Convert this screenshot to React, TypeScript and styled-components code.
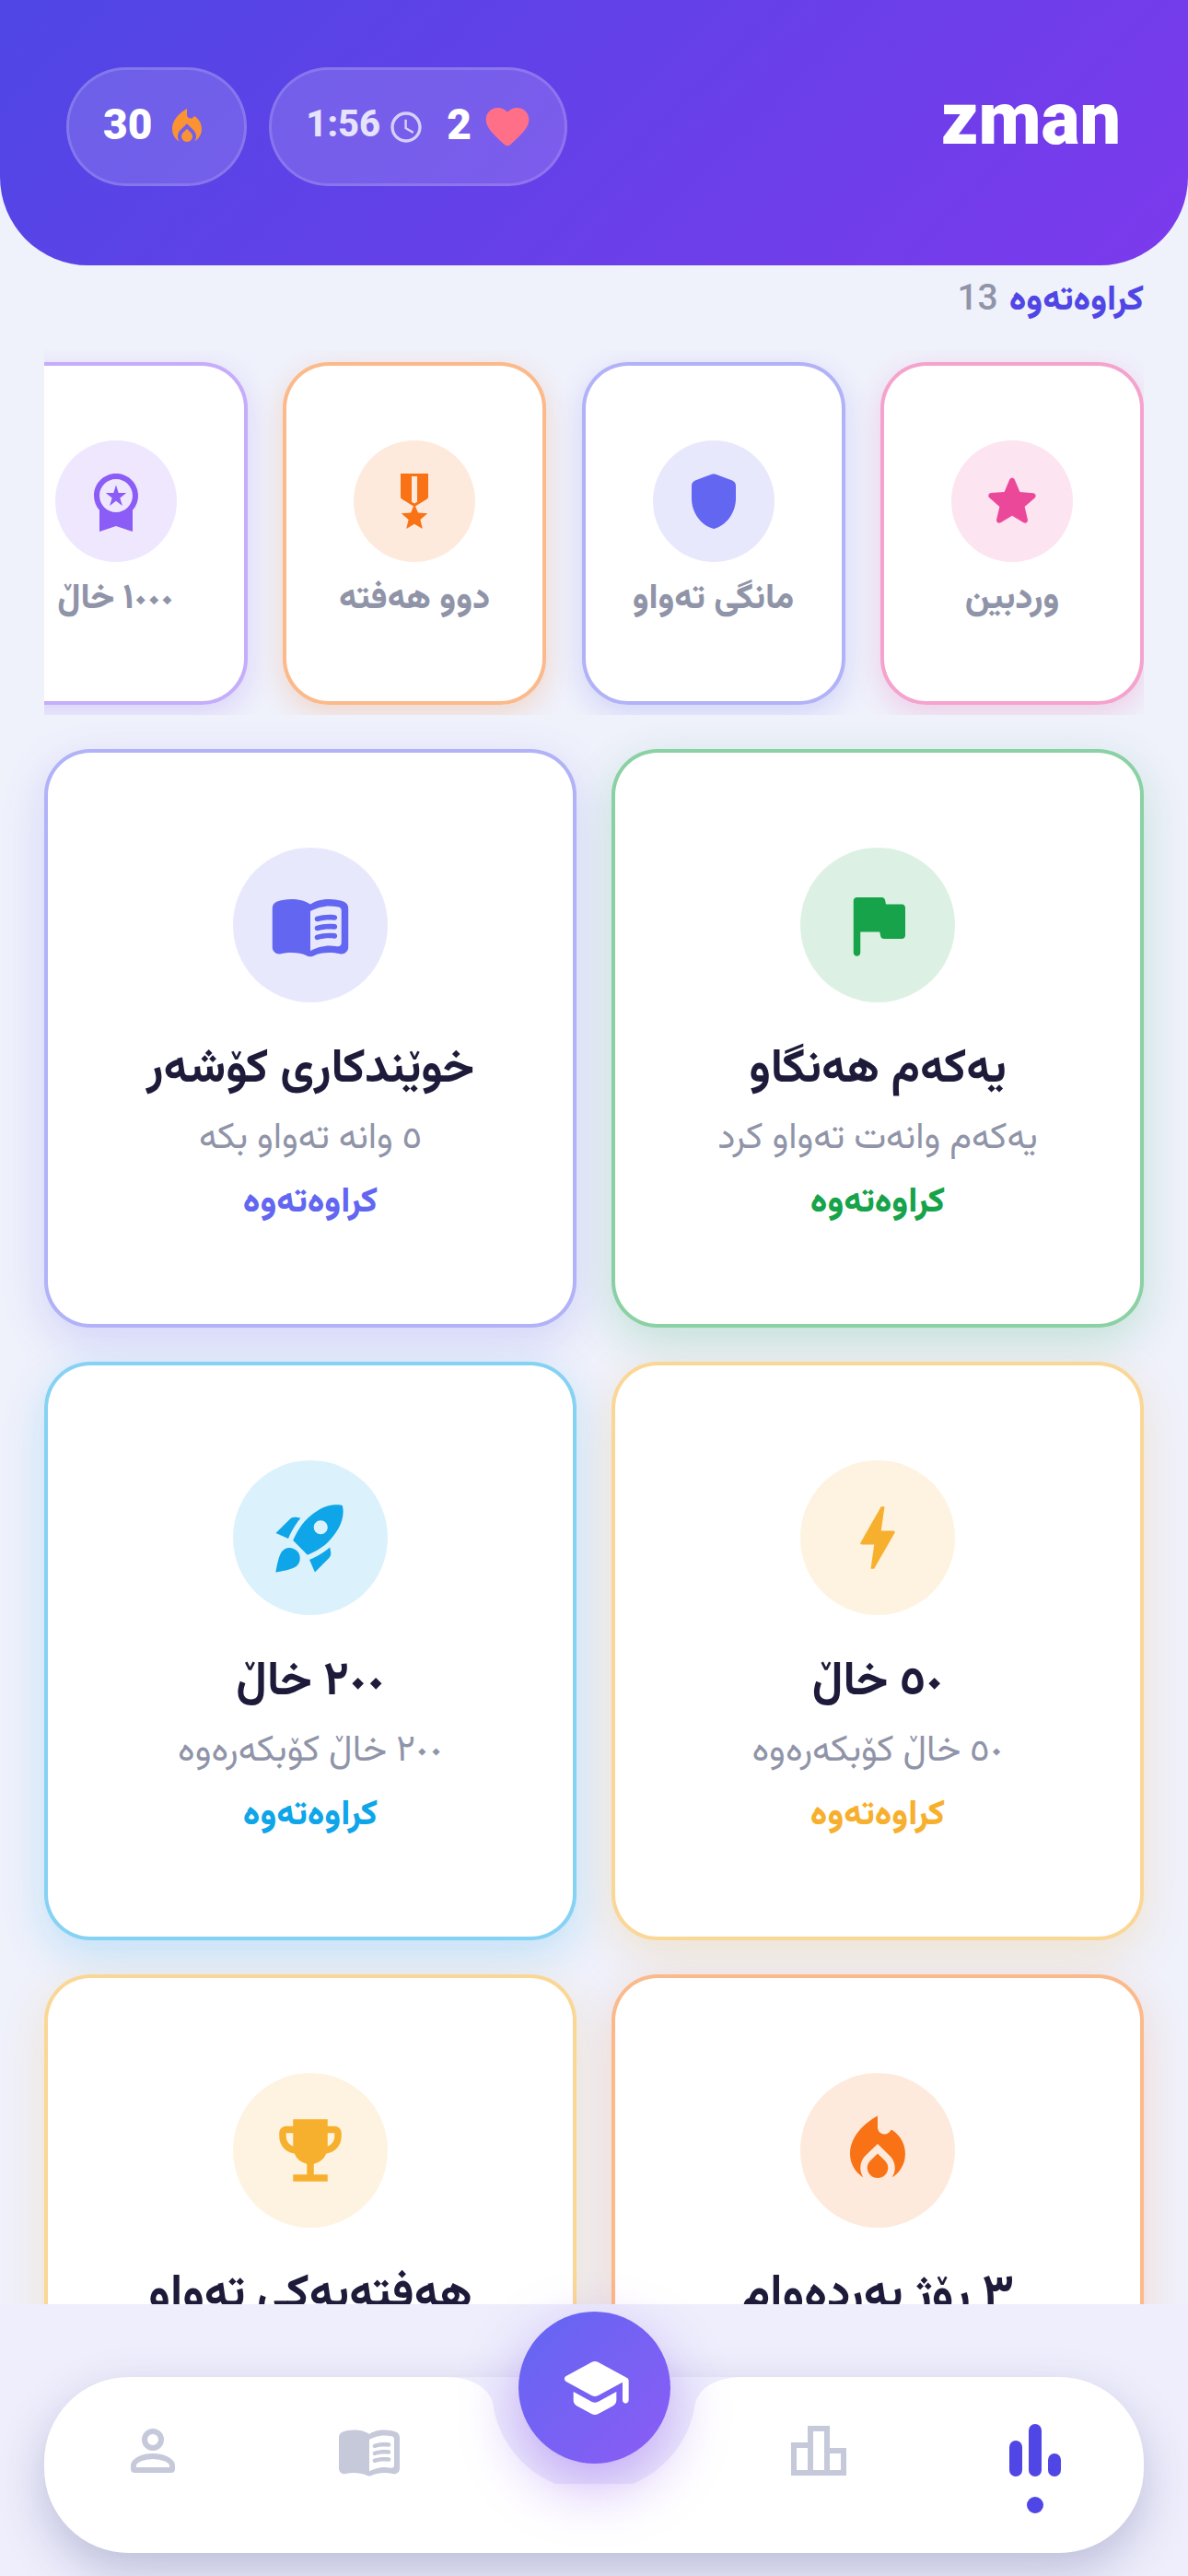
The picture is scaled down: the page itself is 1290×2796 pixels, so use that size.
import * as React from 'react'
import styled, { createGlobalStyle } from 'styled-components'
import {
  MdAccessTime,
  MdBolt,
  MdEmojiEvents,
  MdLocalFireDepartment,
  MdMilitaryTech,
  MdOutlineLeaderboard,
  MdRocketLaunch,
  MdWorkspacePremium,
} from 'react-icons/md'

const Global = createGlobalStyle`
  html, body { margin: 0; padding: 0; background: #eff1fb; }
  * { box-sizing: border-box; }
  body { font-family: Roboto, Vazirmatn, "Noto Sans Arabic", sans-serif; }
`

const Screen = styled.div`
  width: 1290px;
  height: 2796px;
  display: flex;
  flex-direction: column;
  overflow: hidden;
  background: #eff1fb;
`

// ---------------------------------------- [Header] ----------------------------------------
const Header = styled.header`
  flex: none;
  height: 288px;
  padding: 73px 73px 0 72px;
  display: flex;
  justify-content: space-between;
  align-items: flex-start;
  background: linear-gradient(135deg, #4f46e5 0%, #7c3aed 100%);
  border-radius: 0 0 96px 96px;
`

const Stats = styled.div`
  display: flex;
  gap: 24px;
`

const Pill = styled.div<{ $right: number }>`
  height: 129px;
  padding: 0 ${(p) => p.$right}px 0 37px;
  display: flex;
  align-items: center;
  border-radius: 65px;
  background: rgba(255, 255, 255, 0.15);
  border: 3px solid rgba(255, 255, 255, 0.15);
`

const PillNumber = styled.span<{ $gap: number }>`
  font-size: 46px;
  font-weight: 900;
  line-height: 54px;
  margin: -5px ${(p) => p.$gap}px 0 0;
  color: #fff;
`

const PillTime = styled.span`
  font-size: 40px;
  font-weight: 800;
  line-height: 54px;
  margin: -5px 8px 0 0;
  color: #e6e4fd;
`

const ClockIcon = styled(MdAccessTime)`
  color: #d5d0fa;
  margin-right: 24px;
`

const Brand = styled.div`
  font-size: 79px;
  font-weight: 900;
  line-height: 92px;
  color: #fff;
  margin-top: 10px;
`

// ---------------------------------------- [Completed strip] ----------------------------------------
const Main = styled.main`
  flex: 1;
  min-height: 0;
  overflow: hidden;
`

const CountLine = styled.div`
  height: 92px;
  padding: 10px 48px 0 0;
  display: flex;
  gap: 12px;
  line-height: 50px;
`

const CountLabel = styled.span`
  font-size: 38px;
  font-weight: 800;
  color: #4f46e5;
`

const CountValue = styled.span`
  color: #9094a8;
  font-size: 39px;
  font-weight: 500;
`

const Strip = styled.div`
  margin: 0 48px;
  height: 396px;
  padding: 13px 0 11px;
  display: flex;
  gap: 38.5px;
  overflow: hidden;
`

const BadgeCard = styled.div<{ $color: string }>`
  flex: none;
  width: 286px;
  height: 372px;
  padding-top: 81px;
  display: flex;
  flex-direction: column;
  align-items: center;
  background: #fff;
  border: 4px solid ${(p) => p.$color}80;
  border-radius: 50px;
  box-shadow: 0 10px 30px ${(p) => p.$color}33;
`

const IconCircle = styled.div<{ $color: string; $size: number }>`
  flex: none;
  width: ${(p) => p.$size}px;
  height: ${(p) => p.$size}px;
  display: flex;
  align-items: center;
  justify-content: center;
  border-radius: 50%;
  color: ${(p) => p.$color};
  background: ${(p) => p.$color}26;
`

const BadgeLabel = styled.div`
  margin-top: 10px;
  font-size: 38px;
  font-weight: 800;
  line-height: 54px;
  color: #9094a8;
  white-space: nowrap;
`

// ---------------------------------------- [Achievement grid] ----------------------------------------
const Grid = styled.div`
  margin: 37px 48px 0;
  display: grid;
  grid-template-columns: 578px 578px;
  grid-auto-rows: 628px;
  gap: 37px 38px;
`

const Card = styled.div<{ $color: string }>`
  padding-top: 103px;
  display: flex;
  flex-direction: column;
  align-items: center;
  background: #fff;
  border: 4px solid ${(p) => p.$color}80;
  border-radius: 50px;
  box-shadow: 0 16px 48px ${(p) => p.$color}33;
`

const CardTitle = styled.div`
  margin-top: 35px;
  font-size: 51px;
  font-weight: 700;
  line-height: 68px;
  color: #1e1b3a;
`

const CardDesc = styled.div`
  margin-top: 17px;
  font-size: 40px;
  line-height: 50px;
  color: #9094a8;
`

const CardStatus = styled.div<{ $color: string }>`
  margin-top: 19px;
  font-size: 38px;
  font-weight: 800;
  line-height: 50px;
  color: ${(p) => p.$color};
`

// ---------------------------------------- [Bottom navigation] ----------------------------------------
const NavArea = styled.div`
  flex: none;
  position: relative;
  height: 295px;
  padding: 79px 48px 0;
  background: #eeeefc;
`

const NavBar = styled.nav`
  position: relative;
  height: 191px;
  padding: 0 82px;
  display: flex;
  justify-content: space-between;
  background: #fff;
  border-radius: 92px;
  box-shadow: 0 20px 50px rgba(60, 70, 130, 0.28);
`

const NavGroup = styled.div`
  display: flex;
  gap: 163px;
`

const Notch = styled.svg`
  position: absolute;
  left: 422px;
  top: 0;
`

const Fab = styled.button`
  position: absolute;
  left: 563px;
  top: 8px;
  width: 165px;
  height: 165px;
  padding: 0;
  display: flex;
  align-items: center;
  justify-content: center;
  border: none;
  border-radius: 50%;
  color: #fff;
  background: linear-gradient(135deg, #6366f1 0%, #8b5cf6 100%);
  box-shadow: 0 24px 64px rgba(124, 58, 237, 0.4);
`

const NavItem = styled.div<{ $active?: boolean }>`
  position: relative;
  width: 72px;
  padding-top: 44px;
  color: ${(p) => (p.$active ? '#4f46e5' : '#c5c9d9')};
`

const ActiveDot = styled.span`
  position: absolute;
  left: 50%;
  top: 130px;
  width: 18px;
  height: 18px;
  margin-left: -9px;
  border-radius: 50%;
  background: #4f46e5;
`

// ---------------------------------------- [Rounded icons] ----------------------------------------
type IconProps = { size?: number; color?: string }

const roundIcon = (...paths: string[]) => ({ size = 24, color = 'currentColor' }: IconProps) => (
  <svg width={size} height={size} viewBox="0 0 24 24" fill={color}>
    {paths.map((d) => (
      <path key={d} d={d} />
    ))}
  </svg>
)

const StarIcon = roundIcon(
  'M12 17.270l4.150 2.510c.76.46 1.690-.22 1.490-1.080l-1.100-4.720 3.670-3.180c.67-.58.31-1.680-.57-1.750l-4.830-.41-1.890-4.460c-.34-.81-1.500-.81-1.840 0L9.190 8.630l-4.830.41c-.88.07-1.240 1.170-.57 1.750l3.670 3.180-1.100 4.720c-.2.86.73 1.540 1.490 1.080l4.150-2.500z',
)
const ShieldIcon = roundIcon(
  'M11.300 2.260l-6 2.250C4.520 4.810 4 5.550 4 6.390v4.710c0 5.050 3.410 9.760 8 10.910 4.590-1.150 8-5.860 8-10.910V6.390c0-.83-.52-1.580-1.300-1.870l-6-2.250c-.45-.18-.95-.18-1.400-.01z',
)
const FlagIcon = roundIcon(
  'M14.400 6l-.24-1.200c-.09-.46-.5-.8-.98-.8H6c-.55 0-1 .45-1 1v15c0 .55.45 1 1 1s1-.45 1-1v-6h5.600l.24 1.200c.09.47.5.8.98.8H19c.55 0 1-.45 1-1V7c0-.55-.45-1-1-1h-4.600z',
)
const BookIcon = roundIcon(
  'M17.500 4.500c-1.950 0-4.050.4-5.500 1.500-1.450-1.100-3.550-1.500-5.500-1.500-1.450 0-2.990.22-4.280.79C1.490 5.620 1 6.330 1 7.140v11.280c0 1.300 1.220 2.260 2.480 1.940.98-.25 2.020-.36 3.020-.36 1.560 0 3.220.26 4.560.92.600.3 1.280.3 1.870 0 1.340-.67 3-.92 4.560-.92 1 0 2.040.11 3.020.36 1.260.33 2.480-.63 2.480-1.940V7.140c0-.81-.49-1.520-1.220-1.850-1.280-.57-2.820-.79-4.270-.79zM21 17.230c0 .63-.58 1.090-1.200.98-.75-.14-1.530-.2-2.300-.2-1.700 0-4.150.65-5.500 1.500V8c1.350-.85 3.800-1.500 5.500-1.500.92 0 1.830.09 2.700.28.46.1.8.51.8.98v9.470z',
  'M13.980 11.010c-.32 0-.61-.2-.71-.52-.13-.39.09-.82.48-.94 1.540-.5 3.530-.66 5.360-.45.41.05.71.42.66.83-.05.41-.42.71-.83.66-1.620-.19-3.390-.04-4.730.39-.08.01-.16.03-.23.03z',
  'M13.980 13.670c-.32 0-.61-.2-.71-.52-.13-.39.09-.82.48-.94 1.530-.5 3.530-.66 5.360-.45.41.05.71.42.66.83-.05.41-.42.71-.83.66-1.620-.19-3.390-.04-4.730.39-.08.02-.16.03-.23.03z',
  'M13.980 16.330c-.32 0-.61-.2-.71-.52-.13-.39.09-.82.48-.94 1.530-.5 3.530-.66 5.360-.45.41.05.71.42.66.83-.05.41-.42.7-.83.66-1.620-.19-3.390-.04-4.730.39-.08.02-.16.03-.23.03z',
)
const HeartIcon = roundIcon(
  'M13.350 20.130c-.76.69-1.930.69-2.690-.01l-.11-.1C5.300 15.270 1.870 12.150 2 8.260c.06-1.700.93-3.330 2.340-4.290 2.640-1.800 5.900-.96 7.660 1.100 1.760-2.060 5.020-2.910 7.660-1.100 1.410.96 2.280 2.590 2.340 4.290.14 3.890-3.300 7.010-8.550 11.780l-.1.090z',
)
const SchoolIcon = roundIcon(
  'M5 13.180v2.810c0 .73.4 1.410 1.040 1.760l5 2.730c.6.33 1.320.33 1.920 0l5-2.730c.64-.35 1.040-1.030 1.040-1.760v-2.810l-6.040 3.300c-.6.33-1.320.33-1.920 0L5 13.180zm6.040-9.660l-8.430 4.600c-.69.38-.69 1.380 0 1.760l8.430 4.600c.6.33 1.320.33 1.920 0L21 10.090V16c0 .55.45 1 1 1s1-.45 1-1V9.590c0-.37-.2-.7-.52-.88l-9.520-5.190c-.6-.32-1.320-.32-1.920 0z',
)

const PersonIcon = () => (
  <svg width="72" height="72" viewBox="0 0 24 24" fill="none" stroke="currentColor" strokeWidth="2">
    <circle cx="12" cy="8" r="3" />
    <path d="M5.500 19c-.3 0-.5-.2-.5-.5V17.500C5 15.400 8.600 14 12 14s7 1.400 7 3.500v1c0 .3-.2.5-.5.5z" strokeLinejoin="round" />
  </svg>
)

const BarsIcon = () => (
  <svg width="72" height="72" viewBox="0 0 24 24" fill="currentColor">
    <rect x="2.670" y="8.330" width="4.670" height="13" rx="2.330" />
    <rect x="9.670" y="2.330" width="4.670" height="19" rx="2.330" />
    <rect x="16.670" y="13" width="4.670" height="8.330" rx="2.330" />
  </svg>
)

const badges = [
  { label: 'وردبین', color: '#ec4899', Icon: StarIcon },
  { label: 'مانگی تەواو', color: '#6366f1', Icon: ShieldIcon },
  { label: 'دوو هەفتە', color: '#f97316', Icon: MdMilitaryTech },
  { label: '١٠٠٠ خاڵ', color: '#8b5cf6', Icon: MdWorkspacePremium },
]

const cards = [
  { title: 'یەکەم هەنگاو', desc: 'یەکەم وانەت تەواو کرد', color: '#16a34a', Icon: FlagIcon },
  { title: 'خوێندکاری کۆشەر', desc: '٥ وانە تەواو بکە', color: '#6366f1', Icon: BookIcon },
  { title: '٥٠ خاڵ', desc: '٥٠ خاڵ کۆبکەرەوە', color: '#f7b02e', Icon: MdBolt },
  { title: '٢٠٠ خاڵ', desc: '٢٠٠ خاڵ کۆبکەرەوە', color: '#0ea5e9', Icon: MdRocketLaunch },
  { title: '٣ رۆژ بەردەوام', desc: '٣ رۆژ بەردەوام بە', color: '#f97316', Icon: MdLocalFireDepartment },
  { title: 'هەفتەیەکی تەواو', desc: '٧ رۆژ بەردەوام بە', color: '#f7b02e', Icon: MdEmojiEvents },
]

export default function App() {
  return (
    <Screen>
      <Global />
      <Header>
        <Stats>
          <Pill $right={38}>
            <PillNumber $gap={14}>30</PillNumber>
            <MdLocalFireDepartment size={48} color="#fb9233" />
          </Pill>
          <Pill $right={34}>
            <PillTime>1:56</PillTime>
            <ClockIcon size={40} />
            <PillNumber $gap={11}>2</PillNumber>
            <HeartIcon size={56} color="#ff7088" />
          </Pill>
        </Stats>
        <Brand>zman</Brand>
      </Header>

      <Main>
        <CountLine dir="rtl">
          <CountLabel>کراوەتەوە</CountLabel>
          <CountValue>13</CountValue>
        </CountLine>

        <Strip dir="rtl">
          {badges.map((b) => (
            <BadgeCard key={b.label} $color={b.color}>
              <IconCircle $color={b.color} $size={132}>
                <b.Icon size={72} />
              </IconCircle>
              <BadgeLabel>{b.label}</BadgeLabel>
            </BadgeCard>
          ))}
        </Strip>

        <Grid dir="rtl">
          {cards.map((c) => (
            <Card key={c.title} $color={c.color}>
              <IconCircle $color={c.color} $size={168}>
                <c.Icon size={90} />
              </IconCircle>
              <CardTitle>{c.title}</CardTitle>
              <CardDesc>{c.desc}</CardDesc>
              <CardStatus $color={c.color}>کراوەتەوە</CardStatus>
            </Card>
          ))}
        </Grid>
      </Main>

      <NavArea>
        <NavBar>
          <NavGroup>
            <NavItem>
              <PersonIcon />
            </NavItem>
            <NavItem>
              <BookIcon size={72} />
            </NavItem>
          </NavGroup>
          <NavGroup>
            <NavItem>
              <MdOutlineLeaderboard size={72} />
            </NavItem>
            <NavItem $active>
              <BarsIcon />
              <ActiveDot />
            </NavItem>
          </NavGroup>
          <Notch width="350" height="116" viewBox="0 0 350 116">
            <path d="M0 0H13C40 0 60 10 65 28A111 111 0 0 0 285 28C290 10 310 0 337 0H350V-1H0Z" fill="#eeeefc" />
          </Notch>
        </NavBar>
        <Fab>
          <SchoolIcon size={80} />
        </Fab>
      </NavArea>
    </Screen>
  )
}
